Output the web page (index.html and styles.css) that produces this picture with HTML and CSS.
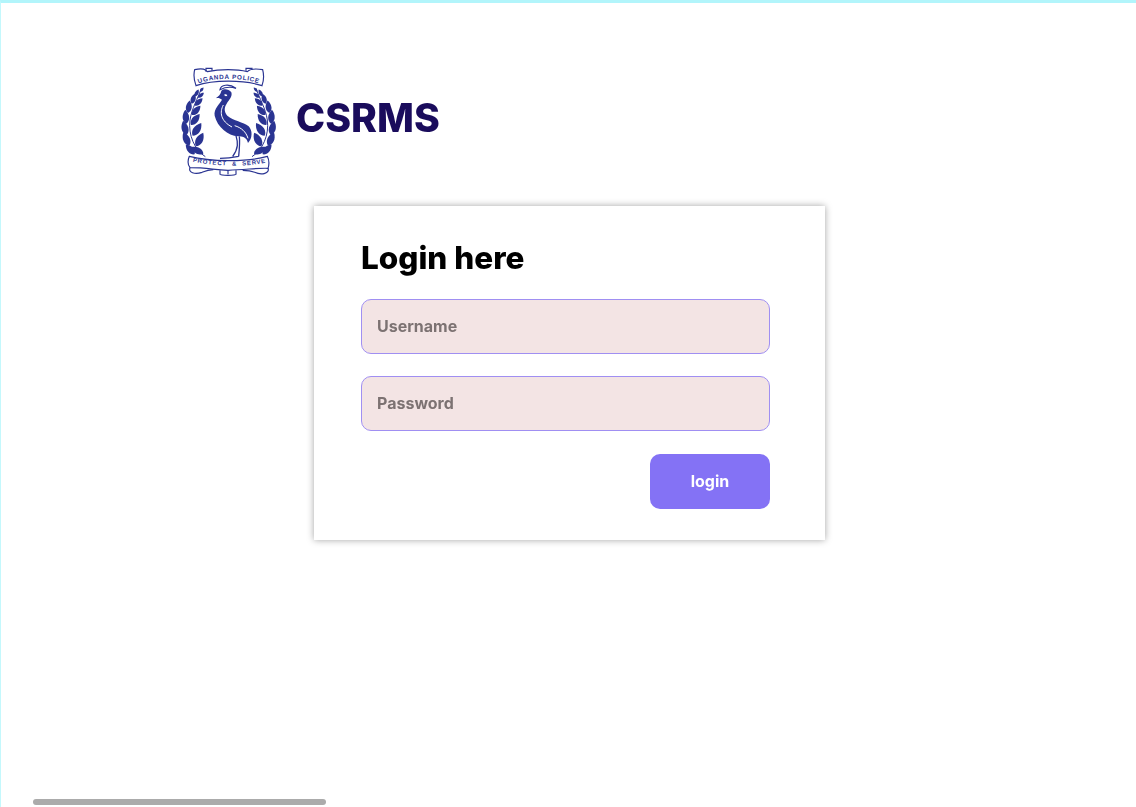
FILE: index.html
```html
<!DOCTYPE html>
<html lang="en">
<head>
<meta charset="utf-8">
<title>CSRMS Login</title>
<link rel="stylesheet" href="styles.css">
</head>
<body>
<div class="page">
  <header class="brand">
    <svg class="crest" viewBox="30 33 291 336" width="97" height="112" aria-label="Uganda Police crest">
      <defs>
        <path id="leaf" d="M0 0C-12 -8 -14 -26 0 -42C14 -26 12 -8 0 0Z"/>
        <g id="wreath">
          <path class="line" d="M106 305C74 285 54 240 60 195C65 160 84 130 94 100"/>
          <use href="#leaf" class="ink" transform="translate(100 296) rotate(-62) scale(1)"/>
          <use href="#leaf" class="ink" transform="translate(74 298) rotate(-42) scale(.95)"/>
          <use href="#leaf" class="ink" transform="translate(78 274) rotate(28) scale(1.1)"/>
          <use href="#leaf" class="ink" transform="translate(58 272) rotate(-24) scale(1.05)"/>
          <use href="#leaf" class="ink" transform="translate(68 242) rotate(34) scale(1.1)"/>
          <use href="#leaf" class="ink" transform="translate(50 240) rotate(-14) scale(1.05)"/>
          <use href="#leaf" class="ink" transform="translate(63 210) rotate(38) scale(1)"/>
          <use href="#leaf" class="ink" transform="translate(49 206) rotate(-4) scale(1)"/>
          <use href="#leaf" class="ink" transform="translate(66 180) rotate(42) scale(.9)"/>
          <use href="#leaf" class="ink" transform="translate(54 174) rotate(8) scale(.9)"/>
          <use href="#leaf" class="ink" transform="translate(75 152) rotate(46) scale(.75)"/>
          <use href="#leaf" class="ink" transform="translate(65 146) rotate(18) scale(.75)"/>
          <use href="#leaf" class="ink" transform="translate(84 128) rotate(50) scale(.55)"/>
          <use href="#leaf" class="ink" transform="translate(75 124) rotate(28) scale(.55)"/>
          <use href="#leaf" class="ink" transform="translate(90 110) rotate(40) scale(.4)"/>
        </g>
        <path id="ribbon-top" d="M86 86C130 67 220 67 268 86"/>
        <path id="ribbon-bottom" d="M68 320C130 333 230 338 290 322"/>
      </defs>
      <use href="#wreath"/>
      <use href="#wreath" transform="translate(352 0) scale(-1 1)"/>
      <path class="ribbon" d="M74 44C100 38 106 44 112 50C150 42 200 42 232 50C240 42 254 40 278 44C282 60 282 76 276 92C220 74 130 74 78 92C72 76 70 60 74 44Z"/>
      <path class="ribbon" d="M108 50V40H126V47M228 47V40H246V44"/>
      <text class="crest-text"><textPath href="#ribbon-top" textLength="182" lengthAdjust="spacing">UGANDA POLICE</textPath></text>
      <path class="ribbon" d="M58 304C52 318 54 330 60 338C110 338 130 344 174 346C230 344 270 338 294 340C298 328 298 316 292 304C230 322 120 320 58 304Z"/>
      <path class="ribbon" d="M60 338C54 352 74 360 96 352C110 346 118 344 130 344M294 340C300 354 276 362 254 352C240 346 230 346 218 346M150 346V358C152 362 196 362 198 358V346M174 346V358"/>
      <text class="crest-text crest-motto"><textPath href="#ribbon-bottom" textLength="220" lengthAdjust="spacing">PROTECT &amp; SERVE</textPath></text>
      <path class="crown" d="M150 104C152 90 176 84 198 100C186 96 166 96 150 104Z"/>
      <path class="ink" d="M137 130C146 124 152 118 154 108C158 100 176 100 184 112C188 124 178 134 170 146C162 158 162 170 172 182C190 198 220 200 236 214C248 226 248 250 234 264C230 246 216 244 204 244C174 242 142 216 134 182C130 162 150 146 156 134C148 128 144 128 137 130Z"/>
      <path class="crown" d="M160 118C166 114 172 116 174 122C170 128 162 126 160 118Z"/>
      <path class="slit" d="M160 150C148 172 152 198 186 216M194 212C214 218 228 230 234 250"/>
      <path class="line thick" d="M198 242C204 262 206 280 188 304M208 244C210 262 208 284 206 304M150 310C166 310 186 308 206 304"/>
    </svg>
    <h1 class="brand-name">CSRMS</h1>
  </header>

  <main class="card">
    <h2 class="card-title">Login here</h2>
    <form class="form">
      <input class="field" type="text" placeholder="Username">
      <input class="field" type="password" placeholder="Password">
      <div class="actions">
        <button class="submit" type="button">login</button>
      </div>
    </form>
  </main>

  <div class="scrollbar"></div>
</div>
</body>
</html>
```

FILE: styles.css
```css
* {
  box-sizing: border-box;
}

html,
body {
  margin: 0;
  height: 100%;
  overflow: hidden;
  background: #fff;
}

body {
  font-family: Inter, "Liberation Sans", sans-serif;
}

.page {
  position: relative;
  height: 807px;
  border-top: 3px solid #b2f5fb;
  border-left: 1px solid #c4f8fc;
  padding-top: 63px;
}

.brand {
  display: flex;
  align-items: center;
  gap: 19px;
  margin-left: 179px;
  height: 112px;
}

.crest {
  flex: none;
  display: block;
}

.ink {
  fill: #2a3492;
}

.line {
  fill: none;
  stroke: #2a3492;
  stroke-width: 3;
}

.line.thick {
  stroke-width: 4;
}

.ribbon {
  fill: none;
  stroke: #2a3492;
  stroke-width: 3.5;
}

.slit {
  fill: none;
  stroke: #fff;
  stroke-width: 3;
}

.crown {
  fill: #fff;
  stroke: #2a3492;
  stroke-width: 3.5;
}

.crest-text {
  font-family: "Liberation Sans", sans-serif;
  font-weight: 700;
  font-size: 19px;
  fill: #2a3492;
}

.crest-motto {
  font-size: 18px;
  word-spacing: 8px;
}

.brand-name {
  margin: 0 0 8px;
  font-size: 39.2px;
  line-height: 46px;
  font-weight: 800;
  color: #1a0c5c;
  will-change: transform;
}

.card {
  width: 511px;
  height: 334px;
  margin: 28px 0 0 313px;
  padding: 32px 55.5px 32px 46.5px;
  background: #fff;
  box-shadow: 0 0 7px rgba(0, 0, 0, 0.36);
}

.card-title {
  margin: 0 0 21.6px;
  font-size: 31.5px;
  line-height: 39px;
  font-weight: 800;
  color: #000;
  will-change: transform;
}

.form {
  display: flex;
  flex-direction: column;
  gap: 23px;
}

.field {
  display: block;
  width: 409px;
  height: 54.5px;
  padding: 0 15px;
  border: 1px solid #a08ff2;
  border-radius: 10px;
  background: #f3e4e4;
  font: 700 16px Inter, "Liberation Sans", sans-serif;
  color: #7c7272;
  will-change: transform;
}

.field::placeholder {
  color: #7c7272;
  opacity: 1;
}

.actions {
  display: flex;
  justify-content: flex-end;
  width: 409px;
}

.submit {
  width: 120px;
  height: 54.5px;
  border: 0;
  border-radius: 10px;
  background: #8472f5;
  color: #fff;
  font: 700 16px Inter, "Liberation Sans", sans-serif;
  will-change: transform;
}

.scrollbar {
  position: absolute;
  left: 32px;
  top: 796px;
  width: 293px;
  height: 6px;
  border-radius: 3px;
  background: #ababab;
}
```
